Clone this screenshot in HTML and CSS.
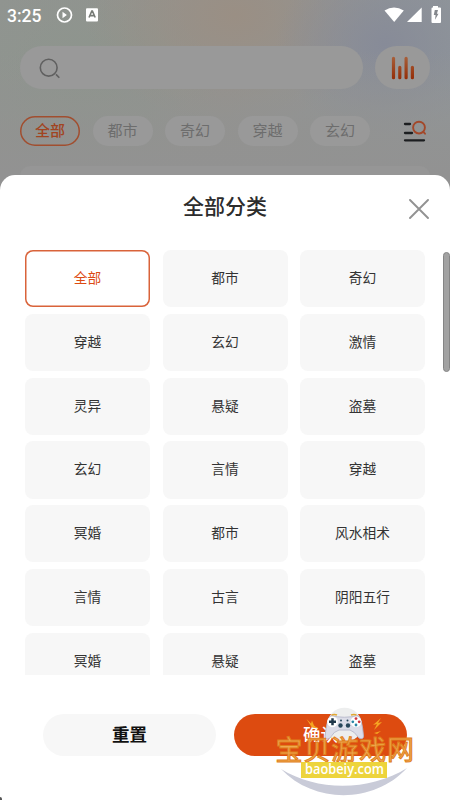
FILE: index.html
```html
<!DOCTYPE html>
<html lang="zh-CN">
<head>
<meta charset="utf-8">
<meta name="viewport" content="width=device-width, initial-scale=1">
<title>全部分类</title>
<link rel="stylesheet" href="styles.css">
</head>
<body>
<div class="screen">
  <header class="status">
    <span class="clock">3:25</span>
    <svg class="status-left" width="44" height="18" viewBox="0 0 44 18">
      <circle cx="8.5" cy="9" r="7" fill="none" stroke="#fff" stroke-width="1.7"/>
      <path d="M6.5 5.8v6.4l4.4-3.2z" fill="#fff"/>
      <rect x="30" y="2.300" width="12" height="13.200" rx="1" fill="#fff"/>
      <path d="M33 11.5 35.8 5h.6l2.8 6.5M34 9.6h4.2" fill="none" stroke="#777b76" stroke-width="1.6"/>
    </svg>
    <svg class="status-right" width="58" height="18" viewBox="0 0 58 18">
      <path d="M.5 4.5Q10 -1.3 19.8 4.5L10.2 16z" fill="#fff"/>
      <path d="M23 16 37.7 1.5V16z" fill="#fff"/>
      <path d="M49 1.5V0h5v1.5h2q1 0 1 1V16q0 1-1 1h-7.500q-1 0-1-1V2.500q0-1 1-1z" fill="#fff"/>
      <path d="M54 4h-3.200l-1 5h1.800l-.6 4.800 3.500-6h-1.600z" fill="#85888d"/>
    </svg>
  </header>
  <div class="search-row">
    <div class="search">
      <svg width="22" height="22" viewBox="0 0 22 22" fill="none" stroke="#606060" stroke-width="1.600">
        <circle cx="9.700" cy="9.700" r="8.400"/><path d="m17 16.400 3.300 3.400"/>
      </svg>
    </div>
    <div class="rank">
      <svg width="24" height="24" viewBox="0 0 24 24">
        <defs><linearGradient id="bars" gradientUnits="userSpaceOnUse" x1="0" y1="0" x2="0" y2="24"><stop stop-color="#a8613c"/><stop offset="1" stop-color="#942b05"/></linearGradient></defs>
        <path d="M2.500 2.300v19.400M8.800 11.300v10.400M15.100 2.300v19.400M21.400 11.300v10.400" stroke="url(#bars)" stroke-width="3.200" stroke-linecap="round"/>
      </svg>
    </div>
  </div>
  <nav class="tabs">
    <span class="tab tab-on">全部</span><span class="tab">都市</span><span class="tab">奇幻</span><span class="tab">穿越</span><span class="tab">玄幻</span>
    <svg class="filter" width="24" height="22" viewBox="0 0 24 22" fill="none" stroke="#1c1e20" stroke-width="2.300" stroke-linecap="round">
      <path d="M2 4h5M2 13h7M2 20.300h19"/>
      <circle cx="16" cy="7.600" r="5.900" stroke="#a3482a" stroke-width="1.900"/><path d="m20.300 11.900 1.700 1.800" stroke="#a3482a" stroke-width="1.900"/>
    </svg>
  </nav>
  <div class="list-top"></div>

  <section class="sheet">
    <div class="sheet-head">
      <h1>全部分类</h1>
      <svg class="close" width="20" height="20" viewBox="0 0 20 20" stroke="#929292" stroke-width="1.900" stroke-linecap="round"><path d="m1 1 18 18M19 1 1 19"/></svg>
    </div>
    <div class="grid">
      <div class="card card-on">全部</div><div class="card">都市</div><div class="card">奇幻</div>
      <div class="card">穿越</div><div class="card">玄幻</div><div class="card">激情</div>
      <div class="card">灵异</div><div class="card">悬疑</div><div class="card">盗墓</div>
      <div class="card">玄幻</div><div class="card">言情</div><div class="card">穿越</div>
      <div class="card">冥婚</div><div class="card">都市</div><div class="card">风水相术</div>
      <div class="card">言情</div><div class="card">古言</div><div class="card">阴阳五行</div>
      <div class="card">冥婚</div><div class="card">悬疑</div><div class="card">盗墓</div>
    </div>
    <div class="scrollbar"></div>
    <div class="actions">
      <div class="btn">重置</div>
      <div class="btn btn-main">确认</div>
    </div>
  </section>
  <div class="corner"></div>

  <svg class="mark" width="150" height="100" viewBox="270 700 150 100">
    <circle cx="344.500" cy="725" r="17.300" fill="#edeeee"/>
    <path d="M281 769C318 792 370 791 407 768C374 804 314 804 281 769Z" fill="#c9cbd8"/>
    <path d="M331 715.500Q344 719 358 715.500Q362 718 363.500 736Q363.500 740 359 738Q354 731 350 730H339Q334 731 330 738Q325 741 325 736Q327 718 331 715.500Z" fill="#dcdde8" stroke="#b5b7c9" stroke-width=".9"/>
    <path d="M331.500 715q3-1 5.500 0M351 715q3-1 5.500 0" fill="none" stroke="#e2a730" stroke-width="1.600"/>
    <circle cx="332.500" cy="721.800" r="5.400" fill="#fff"/><path d="M332.500 718.300v7M329 721.800h7" stroke="#20384a" stroke-width="2.500"/>
    <circle cx="356" cy="721.800" r="5.400" fill="#fff"/>
    <g fill="#ce3542"><circle cx="356" cy="718.600" r="1.400"/><circle cx="359.200" cy="721.800" r="1.400"/></g>
    <g fill="#2986a5"><circle cx="352.800" cy="721.800" r="1.400"/><circle cx="356" cy="725" r="1.400"/></g>
    <g fill="#28475b"><circle cx="340.500" cy="725.500" r="2.200"/><circle cx="348" cy="725.500" r="2.200"/><circle cx="341" cy="720.500" r="1"/><circle cx="347.500" cy="720.500" r="1"/></g>
    <path d="m306.500 719 4.500 4.500 1-3 2 5 4 3-6-1-2-3zM381 718l-8 7 4-1-3 6 8-8-4 1zM374 733l7-2-4 3z" fill="#f5a623"/>
    <text class="mark-name" transform="translate(275.500 759.500) scale(1 1)" textLength="138.500">宝贝游戏网</text>
    <rect x="301" y="762" width="86" height="16" fill="#edd43c"/>
    <text class="mark-url" x="305" y="774.300" textLength="79" lengthAdjust="spacingAndGlyphs">baobeiy.com</text>
  </svg>
</div>
</body>
</html>
```

FILE: styles.css
```css
* { box-sizing: border-box; }
body { margin: 0; font-family: "Noto Sans CJK SC", sans-serif; }
.screen {
  position: relative;
  width: 450px;
  height: 800px;
  overflow: hidden;
  display: flex;
  flex-direction: column;
  background:
    linear-gradient(180deg, rgba(146,146,145,0) 50px, rgba(146,146,145,.8) 145px, #929292 175px),
    radial-gradient(110px 90px at 385px 45px, #878b98, rgba(135,139,152,0)),
    radial-gradient(150px 110px at 235px 15px, #9a8f84, rgba(154,143,132,0)),
    radial-gradient(130px 110px at 90px 80px, #8d958d, rgba(141,149,141,0)),
    linear-gradient(90deg, #909490, #939390 50%, #90969a);
}
.status { height: 46px; flex: none; display: flex; align-items: flex-start; padding: 6px 9px 0 7px; color: #fff; }
.clock { width: 49px; font: 500 17.5px/20px Roboto, sans-serif; }
.status-right { margin-left: auto; margin-right: -1px; }
.search-row { height: 43px; flex: none; display: flex; gap: 12px; padding-left: 20px; }
.search { width: 343px; border-radius: 22px; background: #999; display: flex; align-items: center; padding: 2px 0 0 19px; }
.rank { width: 55px; border-radius: 22px; background: #999; display: flex; align-items: center; justify-content: center; }
.tabs { height: 30px; flex: none; margin: 27px 20px 0 20px; display: flex; align-items: center; gap: 12.5px; }
.tab { width: 60px; flex: none; height: 30px; border-radius: 15px; background: #999; color: #6d6d6d; font-size: 15px; line-height: 28px; text-align: center; }
.tab-on { box-shadow: inset 0 0 0 1.5px #a14e2f; background: transparent; color: #a14421; font-weight: 500; }
.filter { margin-left: 20px; flex: none; }
.list-top { height: 20px; flex: none; margin: 20px 20px 0; border-radius: 10px 10px 0 0; background: #969696; }
.sheet { position: absolute; inset: 175px 0 0; background: #fff; border-radius: 15px 15px 0 0; display: flex; flex-direction: column; }
.sheet-head { height: 75px; flex: none; display: flex; justify-content: center; }
h1 { margin: 0; font-size: 21px; line-height: 61px; font-weight: 500; color: #2c2c2c; }
.close { position: absolute; right: 21px; top: 24px; }
.grid { height: 425px; overflow: hidden; display: grid; grid-template-columns: repeat(3, 125px); grid-auto-rows: 57.25px; gap: 6.5px 12.5px; padding: 0 25px; }
.card { border-radius: 8px; background: #f7f7f7; color: #333; font-size: 13.7px; line-height: 55px; text-align: center; }
.card-on { box-shadow: inset 0 0 0 1.5px #d9633a; background: #fff; color: #dc4b12; }
.scrollbar { position: absolute; right: 0; top: 77px; width: 7px; height: 120px; border: 1px solid #858585; border-radius: 4px; background: #a2a2a2; }
.actions { display: flex; gap: 18px; margin: 39px 43px 0; }
.btn { width: 173px; height: 42px; border-radius: 21px; background: #f7f7f7; color: #111; font-size: 17.5px; line-height: 40px; font-weight: 700; text-align: center; }
.btn-main { background: #dd4b10; color: #fff; font-weight: 500; }
.corner { position: absolute; left: 0; bottom: 0; width: 2px; height: 3px; background: #555; border-top-right-radius: 2px; }
.mark { position: absolute; left: 270px; top: 700px; }
.mark-name { font: 400 27px "Noto Sans CJK SC", sans-serif; fill: #f0a850; stroke: #e0801c; stroke-width: 1; }
.mark-url { font: 600 14.5px "Open Sans", sans-serif; fill: #fff; }
```
